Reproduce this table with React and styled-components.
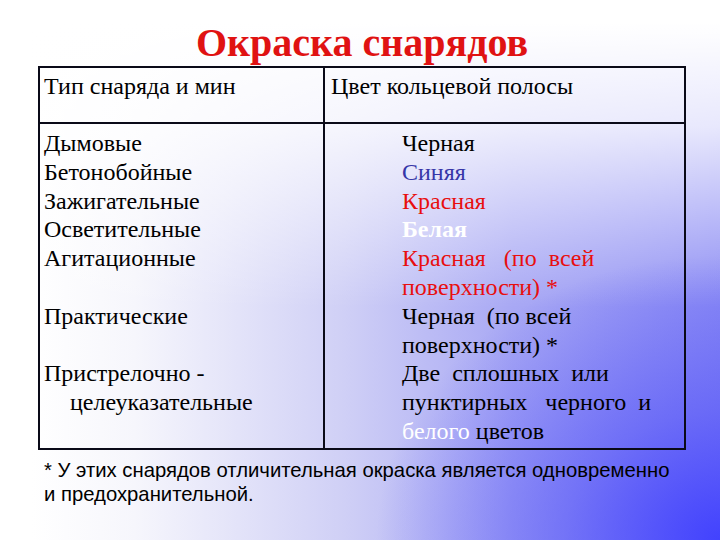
import styled, { createGlobalStyle } from "styled-components";

const GlobalStyle = createGlobalStyle`
  html, body {
    margin: 0;
    padding: 0;
    background: #ffffff;
  }
`;

const SERIF = `"Liberation Serif", "DejaVu Serif", serif`;

const Page = styled.div`
  width: 720px;
  height: 540px;
  padding: 23px 0 0 32px;
  box-sizing: border-box;
  overflow: hidden;
`;

const Slide = styled.div`
  width: 688px;
  height: 517px;
  padding-left: 6px;
  box-sizing: border-box;
  background:
    radial-gradient(
      ellipse 50% 55% at 100% 100%,
      rgba(58, 58, 255, 0.9) 0%,
      rgba(70, 70, 250, 0.5) 45%,
      rgba(80, 80, 250, 0) 100%
    ),
    linear-gradient(
      to bottom,
      #ffffff 0%,
      rgba(255, 255, 255, 0.8) 20%,
      rgba(255, 255, 255, 0) 55%
    ),
    linear-gradient(
      to right,
      #ffffff 0%,
      #f6f6fc 15%,
      #d0d0f6 45%,
      #a8a8f4 70%,
      #8c8cf4 100%
    );
  display: flex;
  flex-direction: column;
`;

const Title = styled.h1`
  margin: 0;
  width: 648px;
  height: 43px;
  display: flex;
  align-items: flex-end;
  justify-content: center;
  font-family: ${SERIF};
  font-weight: bold;
  font-size: 40px;
  line-height: 1;
  color: #e01212;
  padding-bottom: 3px;
  box-sizing: border-box;
`;

const Table = styled.div`
  width: 648px;
  display: grid;
  grid-template-columns: 285px 1fr;
  grid-template-rows: 56px 324px;
  border: 2px solid #0a0a18;
  box-sizing: border-box;
  font-family: ${SERIF};
  font-size: 24px;
  line-height: 28.8px;
  color: #000000;
`;

const Cell = styled.div`
  padding-top: ${(p) => (p.$head ? "4px" : "5px")};
  padding-left: ${(p) => p.$indent || "4px"};
  border-right: ${(p) => (p.$first ? "2px solid #0a0a18" : "none")};
  border-bottom: ${(p) => (p.$head ? "2px solid #0a0a18" : "none")};
`;

const Line = styled.div`
  white-space: pre;
  height: 28.8px;
  padding-left: ${(p) => (p.$indent ? "26px" : "0")};
  color: ${(p) => p.$color || "#000000"};
  font-weight: ${(p) => (p.$bold ? "bold" : "normal")};
`;

const Colored = styled.span`
  color: ${(p) => p.$color};
`;

const Note = styled.p`
  margin: 8px 0 0 6px;
  font-family: "Liberation Sans", sans-serif;
  font-size: 20.3px;
  line-height: 24px;
  color: #000000;
`;

const RED = "#e80f0f";
const BLUE = "#3636a8";
const WHITE = "#ffffff";

const types = [
  { text: "Дымовые" },
  { text: "Бетонобойные" },
  { text: "Зажигательные" },
  { text: "Осветительные" },
  { text: "Агитационные" },
  { text: "" },
  { text: "Практические" },
  { text: "" },
  { text: "Пристрелочно -" },
  { text: "целеуказательные", indent: true },
];

const colors = [
  { text: "Черная" },
  { text: "Синяя", color: BLUE },
  { text: "Красная", color: RED },
  { text: "Белая", color: WHITE, bold: true },
  { text: "Красная   (по  всей", color: RED },
  { text: "поверхности) *", color: RED },
  { text: "Черная  (по всей" },
  { text: "поверхности) *" },
  { text: "Две  сплошных  или" },
  { text: "пунктирных   черного  и" },
];

export default function App() {
  return (
    <>
      <GlobalStyle />
      <Page>
        <Slide>
          <Title>Окраска снарядов</Title>
          <Table>
            <Cell $head $first>
              Тип снаряда и мин
            </Cell>
            <Cell $head $indent="6px">
              Цвет кольцевой полосы
            </Cell>
            <Cell $first>
              {types.map((t, i) => (
                <Line key={i} $indent={t.indent}>
                  {t.text}
                </Line>
              ))}
            </Cell>
            <Cell $indent="77px">
              {colors.map((c, i) => (
                <Line key={i} $color={c.color} $bold={c.bold}>
                  {c.text}
                </Line>
              ))}
              <Line>
                <Colored $color={WHITE}>белого</Colored> цветов
              </Line>
            </Cell>
          </Table>
          <Note>
            * У этих снарядов отличительная окраска является одновременно
            <br />и предохранительной.
          </Note>
        </Slide>
      </Page>
    </>
  );
}
